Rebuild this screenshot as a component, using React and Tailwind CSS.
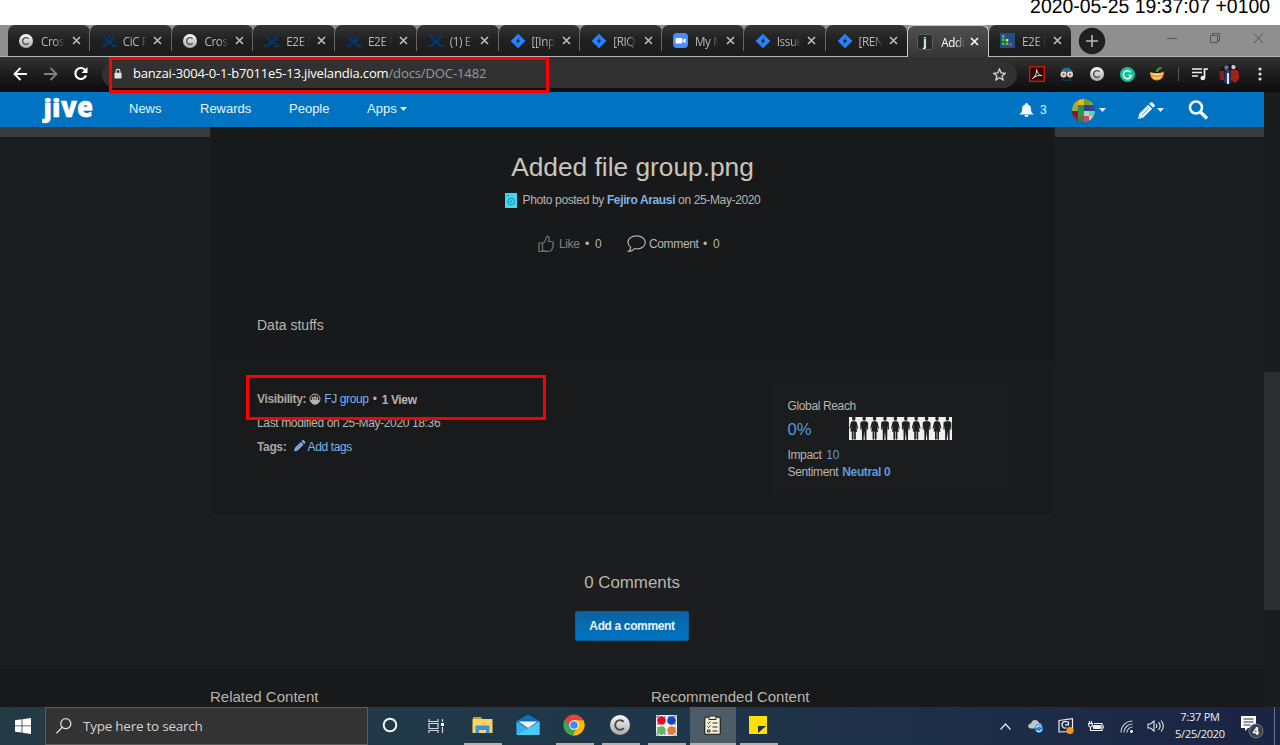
import React from "react";

const UI = "font-['Open_Sans','Noto_Sans',sans-serif]";

function CIcon({ size = 14 }) {
  return (
    <svg width={size} height={size} viewBox="0 0 24 24" className="shrink-0">
      <defs>
        <linearGradient id="cg" x1="0" y1="0" x2="0" y2="1">
          <stop offset="0" stopColor="#fafafa" />
          <stop offset="1" stopColor="#a9a9a9" />
        </linearGradient>
      </defs>
      <circle cx="12" cy="12" r="12" fill="url(#cg)" />
      <path d="M16.5 8.300a5.800 5.800 0 1 0 0 7.400" fill="none" stroke="#4c4c4c" strokeWidth="2.300" />
    </svg>
  );
}

function CrossIcon() {
  return (
    <svg width="16" height="14" viewBox="0 0 16 14" className="shrink-0" fill="none" stroke="#06366f">
      <path d="M3 1.500c.5 3 2 4.500 4.500 6 2 1.200 3.500 2.500 5 5" strokeWidth="2.300" />
      <path d="M13 1.500c-.5 3-2 4.500-4.500 6-2 1.200-3.500 2.500-5 5" strokeWidth="2.300" />
      <path d="M.5 12h4M11.500 12h4" strokeWidth="1.800" />
      <circle cx="8" cy="2.800" r="1.300" fill="#06366f" stroke="none" />
    </svg>
  );
}

function JiraIcon() {
  return (
    <svg width="16" height="16" viewBox="0 0 16 16" className="shrink-0">
      <path d="M8 .7 15.300 8 8 15.300.7 8z" fill="#2684ff" />
      <path d="M8 3.200 10.200 5.400 8 6.200zM8 9.800v3L5.800 10.600z" fill="#1767dd" />
      <path d="M8 6 10 8 8 10 6 8z" fill="#202020" />
    </svg>
  );
}

function ZoomIcon() {
  return (
    <svg width="15" height="15" viewBox="0 0 15 15" className="shrink-0">
      <rect width="15" height="15" rx="4" fill="#4a8cf7" />
      <rect x="2.500" y="5" width="6.800" height="5.500" rx="1" fill="#fff" />
      <path d="m9.800 7 2.800-1.800v5L9.800 8.600z" fill="#fff" />
    </svg>
  );
}

function JIcon() {
  return (
    <svg width="16" height="16" viewBox="0 0 16 16" className="shrink-0">
      <rect x=".5" y=".5" width="15" height="15" rx="2" fill="#292929" stroke="#5c5c5c" />
      <text x="8" y="11.500" textAnchor="middle" fontFamily="Liberation Sans" fontWeight="700" fontSize="12" fill="#fff">j</text>
    </svg>
  );
}

function GridIcon() {
  return (
    <svg width="15" height="15" viewBox="0 0 15 15" className="shrink-0">
      <rect width="15" height="15" fill="#1f4e8c" />
      <path d="M2 2h2.500v2.500H2zM2 5.500h2.500V8H2zM2 9.500h2.500V12H2zM5.800 9.500h2.500V12H5.800z" fill="#5fc03a" />
      <path d="M5.800 6h2.500v2.500H5.800z" fill="#f1dc45" />
      <path d="M9.500 10H12v2.500H9.500z" fill="#e5395a" />
    </svg>
  );
}

const ICONS = { c: CIcon, x: CrossIcon, jira: JiraIcon, zoom: ZoomIcon, j: JIcon, grid: GridIcon };

const TABS = [
  ["c", "Cros"], ["x", "CiC P"], ["c", "Cros"], ["x", "E2E F"], ["x", "E2E F"], ["x", "(1) E"],
  ["jira", "[[Inp"], ["jira", "[RIQ"], ["zoom", "My M"], ["jira", "Issue"], ["jira", "[REN"],
  ["j", "Addi"], ["grid", "E2E F"],
];

function Tab({ icon, title, index }) {
  const Icon = ICONS[icon];
  const active = index === 11;
  const shape = active
    ? "rounded-t-[7px] border border-b-0 border-[#c9c9c9] bg-linear-to-b from-[#505050] to-[#353535] text-white"
    : "mb-px rounded-t-[7px] bg-linear-to-b from-[#353535] via-[#202020] to-[#1b1b1b] text-[#b8b8b8]";
  const line = index < 10 ? "bg-[#666]" : "bg-transparent";
  return (
    <div className={`flex w-[81.75px] shrink-0 items-center ${shape}`}>
      <div className={`flex w-[33px] shrink-0 justify-start ${active ? "pl-[9px]" : "pl-[11px]"}`}>
        <Icon />
      </div>
      <div className={`w-[24px] shrink-0 overflow-hidden text-[11.7px] leading-4 tracking-[-0.4px] whitespace-nowrap mask-r-from-60% mask-r-to-100% ${UI}`}>{title}</div>
      <svg width="9" height="9" viewBox="0 0 9 9" className={`shrink-0 ${active ? "ml-[5px]" : "ml-[6.5px]"}`} stroke={active ? "#fff" : "#bdbdbd"} strokeWidth="1.600">
        <path d="m1 1 7 7M8 1 1 8" />
      </svg>
      <div className={`ml-auto h-[20px] w-px ${line}`} />
    </div>
  );
}

function TabStrip() {
  return (
    <div className="flex h-[32px] shrink-0 border-b border-[#b5b5b5] bg-[#8f8f8f]">
      <div className="-mb-px flex pl-[8px]">
        {TABS.map(([icon, title], i) => <Tab key={i} icon={icon} title={title} index={i} />)}
      </div>
      <svg width="28" height="28" viewBox="0 0 28 28" className="mt-[2px] ml-[7px]">
        <circle cx="14" cy="14" r="13.200" fill="#202020" />
        <path d="M14 8v12M8 14h12" stroke="#b9b9b9" strokeWidth="1.600" />
      </svg>
      <svg width="100" height="28" viewBox="0 0 100 28" className="ml-auto mr-[14px]" fill="none" stroke="#555">
        <path d="M1 13.500h10" />
        <path d="M44.500 10.500h7v7h-7zM46.500 10.500v-2h7v7h-2" />
        <path d="m88 8.500 9 9.500M97 8.500 88 18" />
      </svg>
    </div>
  );
}

function Toolbar() {
  return (
    <div className="flex h-[35px] shrink-0 items-center bg-linear-to-b from-[#333] via-[#1d1d1d] to-[#0c0c0c]">
      <svg width="102" height="34" viewBox="0 0 102 34" className="-mt-[2px]" fill="none" strokeWidth="1.900">
        <path d="M27 17H15m5.500-6L14.500 17l6 6" stroke="#f4f4f4" />
        <path d="M44 17h12m-5.500-6 6 6-6 6" stroke="#7f7f7f" />
        <path d="M85.500 13.500A5.500 5.500 0 1 0 86 18.500" stroke="#fff" strokeWidth="2.200" />
        <path d="M87.500 10v6h-6z" fill="#fff" />
      </svg>
      <div className={`mb-[1px] flex h-[27px] w-[915px] shrink-0 items-center rounded-full bg-[#313131] pr-[11px] pl-[12px] ${UI}`}>
        <svg width="8" height="12" viewBox="0 0 9 12"><rect x=".5" y="4.500" width="8" height="6.500" rx=".8" fill="#e0e0e0" /><path d="M2.300 5V3a2.200 2.200 0 0 1 4.400 0v2" fill="none" stroke="#e0e0e0" strokeWidth="1.200" /></svg>
        <div className="ml-[11px] text-[13px] whitespace-nowrap text-[#9b9b9b]">
          <span className="tracking-[-0.18px] text-white">banzai-3004-0-1-b7011e5-13.jivelandia.com</span>
          <span className="tracking-[-0.1px]">/docs/DOC-1482</span>
        </div>
        <svg width="13" height="13" viewBox="0 0 24 24" className="ml-auto" fill="none" stroke="#d5d5d5" strokeWidth="2.400"><path d="m12 2 3 7 7.500.7-5.700 5 1.800 7.300L12 18l-6.600 4 1.800-7.300-5.700-5L9 9z" /></svg>
      </div>
      <div className="mb-[1px] flex items-center">
        <svg width="16" height="16" viewBox="0 0 16 16" className="ml-[12px]"><rect x=".7" y=".7" width="14.600" height="14.600" fill="#2a0906" stroke="#c11d0b" strokeWidth="1.400" /><path d="M3.500 12.500C6 11 8 7 7.500 3.500c2 5.500 3.500 6 5.500 6-4-.5-6 .5-9.500 3z" fill="none" stroke="#f1dddd" /></svg>
        <svg width="16" height="16" viewBox="0 0 16 16" className="ml-[14px]"><path d="M2 7c0-4 3-6 6-5l2-1 1 2c3 1 3 3 3 5z" fill="#26718a" /><path d="M3 11c2 4 7 4 9 0v4H4z" fill="#173c4b" /><circle cx="4.500" cy="8.500" r="3" fill="#ead9cf" /><circle cx="11" cy="8.500" r="3" fill="#ead9cf" /><circle cx="4.500" cy="8.500" r="1.200" fill="#d54a35" /><circle cx="11" cy="8.500" r="1.200" fill="#d54a35" /></svg>
        <div className="ml-[15px]"><CIcon /></div>
        <svg width="15" height="15" viewBox="0 0 15 15" className="ml-[16px]"><circle cx="7.500" cy="7.500" r="7.500" fill="#15c39a" /><path d="M10.500 5.200a4 4 0 1 0 .8 3.300H8.500" fill="none" stroke="#fff" strokeWidth="1.400" /></svg>
        <svg width="16" height="16" viewBox="0 0 16 16" className="ml-[14px]"><path d="M1 6c4 1.500 10 1.500 14-.5 0 5-2.500 9-7 9S1 11 1 6z" fill="#ef9d27" /><path d="M2 7.500c4 1.500 8 1.500 12 0M4 11c2.500 1.500 5.500 1.500 8 0" stroke="#ffe6b0" strokeWidth="1.100" fill="none" /><path d="M7 6c0-3 2-4.500 5-5l1 2c-3 0-4 1.500-4 3z" fill="#4f9b28" /></svg>
        <div className="ml-[13px] h-[14px] w-px bg-[#555]" />
        <svg width="16" height="14" viewBox="0 0 16 14" className="ml-[13px]" stroke="#eee" strokeWidth="1.700" fill="none"><path d="M0 2h10M0 5.500h10M0 9h6M12.500 11V2H16" /><circle cx="10.800" cy="11" r="1.500" fill="#eee" /></svg>
        <svg width="21" height="21" viewBox="0 0 21 21" className="ml-[11px]"><defs><clipPath id="av"><circle cx="10.500" cy="10.500" r="10.500" /></clipPath></defs><g clipPath="url(#av)"><rect width="21" height="21" fill="#151824" /><path d="M0 7h5v9H1z" fill="#8d1d25" /><path d="M6 6h5l1 13H5z" fill="#29386d" /><path d="M8 9h2v11H8z" fill="#dce5ef" /><path d="M12 6h7l2 9-5 4-4-3z" fill="#9f2418" /><circle cx="7.500" cy="3.500" r="2.200" fill="#7e6d68" /><circle cx="14.500" cy="3" r="2.200" fill="#cfc9c4" /></g></svg>
        <svg width="4" height="14" viewBox="0 0 4 14" className="ml-[18px]" fill="#ddd"><circle cx="2" cy="2" r="1.600" /><circle cx="2" cy="7" r="1.600" /><circle cx="2" cy="12" r="1.600" /></svg>
      </div>
    </div>
  );
}

function Caret() {
  return <svg width="7" height="4" viewBox="0 0 7 4" className="shrink-0"><path d="M0 0h7L3.500 4z" fill="#e6f1f9" /></svg>;
}

function Pencil({ size, color, line }) {
  return (
    <svg width={size} height={size} viewBox="0 0 18 18" className="shrink-0" fill={color}>
      <path d="M11.800 1.900 13.200.5q1-.9 2 0l2.300 2.300q.9 1 0 2L16.100 6.200zM10.800 3 15 7.200 5.800 16.500 0 18 1.500 12.200z" />
      <path d="M4.500 13.500 11.500 6.500" stroke={line} strokeWidth="1" />
    </svg>
  );
}

const MOSAIC = [
  "#c8a51b", "#e9b417", "#6fa02a", "#86a938",
  "#95ac45", "#2c9148", "#2a3f8d", "#34468f",
  "#8d1520", "#3f8a55", "#9be0c5", "#68cdb7",
  "#a61d24", "#4a7a3c", "#cf4668", "#d9c9b4",
];

function SiteHeader() {
  return (
    <div className="flex h-[35px] shrink-0 items-center bg-[#0074c2] text-[13px] text-[#eaf4fb]">
      <svg width="52" height="35" viewBox="0 0 52 35" className="ml-[42px]" fontFamily="Open Sans" fontWeight="800" fill="#fff" stroke="#fff" strokeWidth=".4">
        <text x="1.500" y="24.500" textLength="17" lengthAdjust="spacingAndGlyphs" fontSize="24">ji</text>
        <text x="19" y="24.500" textLength="32" lengthAdjust="spacingAndGlyphs" fontSize="29">ve</text>
      </svg>
      <div className="-mt-px ml-[35px] w-[71px]">News</div>
      <div className="-mt-px w-[89px]">Rewards</div>
      <div className="-mt-px w-[78px]">People</div>
      <div className="-mt-px flex items-center gap-[3px]">Apps <Caret /></div>
      <div className="ml-auto flex w-[245px] items-center">
        <svg width="15" height="14" viewBox="0 0 15 14"><path d="M6.500 0h2v1.200c2.500.6 3.500 2.500 3.500 4.800 0 3 .8 4 2.500 5v.5H.5V11C2.200 10 3 9 3 6c0-2.300 1-4.200 3.500-4.800zM5.500 12h4c0 2.500-4 2.500-4 0z" fill="#f1f7fb" /></svg>
        <span className="ml-[6px] w-[32px] text-[12px]">3</span>
        <div className="mt-[2px] grid size-[23px] grid-cols-4 overflow-hidden rounded-full">
          {MOSAIC.map((c, i) => <div key={i} style={{ backgroundColor: c }} />)}
        </div>
        <div className="ml-[4px] w-[39px]"><Caret /></div>
        <div className="mt-[2px]"><Pencil size={17} color="#eef6fb" line="#5aa5d8" /></div>
        <div className="ml-[2px] w-[31px]"><Caret /></div>
        <svg width="21" height="20" viewBox="0 0 21 20" fill="none" stroke="#f3f8fc"><circle cx="8" cy="7.500" r="6" strokeWidth="2.600" /><path d="m12.500 12 6.500 6.500" strokeWidth="3.400" /></svg>
      </div>
    </div>
  );
}

function People() {
  const items = Array.from({ length: 10 }, (_, i) => i);
  return (
    <svg width="104" height="23" viewBox="0 0 104 23">
      <rect width="103" height="23" fill="#f2f1ee" />
      <g fill="#1f2121">
        {items.map((i) => (
          <g key={i} transform={`translate(${i * 10.400} 0)`}>
            <ellipse cx="4.800" cy="1.600" rx="1.700" ry="2.200" />
            {i % 2 === 0
              ? <path d="M3.200 4.300h3.200l1.300 1 1.500 6-.9.800-1.300-3.500 1.300 6.200H6.800V22.500H5.100v-8h-.6v8H2.800v-8H1.300L2.600 8.600 1.300 12.100l-.9-.8 1.500-6z" />
              : <path d="M2.800 4.300h4l1.900 1.200v7l-1 .3V8.500L7.100 14 7 23H5.500l-.7-8.500L4.100 23H2.600l-.1-9-.6-5.500v4.300l-1-.3v-7z" />}
          </g>
        ))}
      </g>
    </svg>
  );
}

function Post() {
  return (
    <div className="mx-auto h-[389px] w-[843px] shrink-0 border-b border-[#1f2122] bg-[#18191b]">
      <div className="h-[237px] border-b border-[#1c1e1f]">
        <h1 className="pt-[25px] text-center text-[26.3px] leading-[30px] text-[#c9c5bc]">Added file group.png</h1>
        <div className="mt-[10px] flex items-center justify-center gap-[6px] text-[12px] leading-4 tracking-[-0.36px]">
          <svg width="12" height="15" viewBox="0 0 12 15"><path d="M0 0h12v15H0z" fill="#42d7f2" /><circle cx="6.200" cy="8.500" r="3.300" fill="none" stroke="#168ca5" /><circle cx="6.200" cy="8.500" r="1" fill="#168ca5" /><path d="M2 2.500h2" stroke="#168ca5" /></svg>
          <div className="whitespace-nowrap">Photo posted by <b className="text-[#7fb3e6]">Fejiro Arausi</b> on 25-May-2020</div>
        </div>
        <div className="mt-[27px] flex h-[18px] items-center pl-[327px] text-[12px] tracking-[-0.36px]">
          <svg width="16" height="18" viewBox="0 0 16 18" fill="none" stroke="#77746e" strokeWidth="1.200"><path d="M1 8h3.500v8.500H1zM4.500 8.500C7 7 8 5 8.500 1.500c3-1 3 2 2 5H14c2 0 1.500 2 .8 2.500.8.700.6 2-.3 2.500.5 1 .2 1.800-.6 2.300.3 1-.2 2-1.400 2.200C9 17 7.500 16.500 4.500 15.800" /></svg>
          <span className="ml-[5px] w-[26px] text-[#85827c]">Like</span>
          <span className="w-[10px] text-[#bdb9b1]">•</span>
          <span className="w-[32px]">0</span>
          <svg width="19" height="18" viewBox="0 0 19 18" fill="none" stroke="#b3afa7" strokeWidth="1.200"><path d="M3.500 12C0 9.500.500 5 3 3c3.500-2.800 9.500-2.800 13 0 3 2.500 3 6.500 0 9-2.500 2-6 2.200-8.500 1.500C6 15.500 4 16.500 1.500 16.500 3 15.500 4 14 3.500 12z" /></svg>
          <span className="ml-[3px] w-[54px]">Comment</span>
          <span className="w-[10px]">•</span>
          <span>0</span>
        </div>
        <div className="mt-[62px] pl-[46px] text-[14px] leading-5">Data stuffs</div>
      </div>
      <div className="flex h-[151px] bg-[#191a1c] pl-[46px] text-[12px] tracking-[-0.36px]">
        <div className="w-[517px] pt-[27px] leading-4">
          <div className="flex items-center whitespace-nowrap">
            <b className="text-[#aba79f]">Visibility:</b>
            <svg width="12" height="12" viewBox="0 0 12 12" className="mr-[3px] ml-[3px] -mt-px"><circle cx="6" cy="6" r="5" fill="#2b2b2a" stroke="#b7b3aa" /><path d="M1.500 7h9a4.500 4.500 0 0 1-9 0z" fill="#b7b3aa" /><path d="M3 4h1.500v3H3zM5.300 3h1.500v4H5.300zM7.600 4H9v3H7.600z" fill="#b7b3aa" /></svg>
            <span className="text-[#7fb3e6]">FJ group</span>
            <span className="ml-[4px] w-[9px]">•</span>
            <b className="mt-[1px] -mb-[1px]">1 View</b>
          </div>
          <div className="mt-[8px]">Last modified on 25-May-2020 18:36</div>
          <div className="mt-[8px] flex items-center"><b className="w-[37px] text-[#aba79f]">Tags:</b><div className="-mt-[2px]"><Pencil size={11.5} color="#7fb3e6" line="#4a6f93" /></div><span className="ml-[2px] text-[#7fb3e6]">Add tags</span></div>
        </div>
        <div className="mt-[19px] h-[111px] w-[234px] bg-[#1b1c1e] pt-[15px] pl-[13.5px] leading-4">
          <div>Global Reach</div>
          <div className="mt-[3px] flex h-[23px] items-center tracking-normal"><span className="w-[61.5px] text-[16.5px] text-[#5a9bd8]">0%</span><People /></div>
          <div className="mt-[7px]">Impact <span className="ml-[2px] text-[#5a9bd8]">10</span></div>
          <div className="mt-[1px]">Sentiment <b className="ml-[1px] text-[#5a9bd8]">Neutral 0</b></div>
        </div>
      </div>
    </div>
  );
}

function Page() {
  return (
    <div className="flex min-h-0 flex-1 bg-[#1c1d1f]">
      <div className="flex w-[1264px] flex-col overflow-hidden text-[#b9b5ac]">
        <SiteHeader />
        <div className="flex h-[389px] shrink-0 justify-between">
          <div className="h-[10px] w-[210px] bg-[#373b3e]" />
          <Post />
          <div className="h-[10px] w-[209px] bg-[#373b3e]" />
        </div>
        <div className="flex h-[153px] shrink-0 flex-col items-center pt-[57px]">
          <div className="text-[16.9px] leading-5">0 Comments</div>
          <button className="mt-[18px] h-[30px] w-[114px] rounded-[2px] border border-[#0a5c99] bg-linear-to-b from-[#0963a1] to-[#0074c4] text-[12px] font-bold tracking-[-0.36px] text-[#eaf3fa]">Add a comment</button>
        </div>
        <div className="flex flex-1 bg-[#18191a] pt-[18px] pl-[210px] text-[15px] leading-5">
          <div className="w-[441px]">Related Content</div>
          <div>Recommended Content</div>
        </div>
      </div>
      <div className="flex-1 bg-[#191b1c] pt-[280px]"><div className="h-[238px] bg-[#2b2d2f]" /></div>
    </div>
  );
}

function TaskButton({ children, open, active }) {
  return (
    <div className={`flex w-[46px] shrink-0 flex-col items-center ${active ? "bg-[#4c5d67]" : ""}`}>
      <div className="flex h-[36px] items-center justify-center pr-[2px]">{children}</div>
      <div className={`h-[2px] ${active ? "w-[46px]" : "w-[38px]"} ${open ? "bg-[#b3afaa]" : ""}`} />
    </div>
  );
}

function Taskbar() {
  return (
    <div className={`flex h-[38px] shrink-0 bg-linear-to-r from-[#243b45] via-[#20374a] to-[#1a2444] ${UI}`}>
      <div className="flex w-[45px] items-center justify-center">
        <svg width="16" height="16" viewBox="0 0 16 16" fill="#fff"><path d="M0 2.200 6.600 1.300v6.200H0zM7.400 1.200 16 0v7.500H7.400zM0 8.300h6.600v6.300L0 13.700zM7.400 8.300H16V16l-8.600-1.200z" /></svg>
      </div>
      <div className="flex w-[323px] items-center border border-[#5c5c5c] bg-[#333] pl-[10px]">
        <svg width="16" height="16" viewBox="0 0 16 16" fill="none" stroke="#dcdcdc" strokeWidth="1.300"><circle cx="9.800" cy="5.700" r="5" /><path d="M6.200 9.300.5 15.200" /></svg>
        <span className="ml-[11px] text-[13.5px] tracking-[-0.25px] text-[#d2d2d2]">Type here to search</span>
      </div>
      <TaskButton><svg width="16" height="16"><circle cx="8" cy="8" r="6.300" fill="none" stroke="#f5f5f5" strokeWidth="2" /></svg></TaskButton>
      <TaskButton><svg width="17" height="14" viewBox="0 0 17 14" className="mt-px" fill="none" stroke="#d6dadd" strokeWidth="1.200"><path d="M1 0v2.500h9V0M1 14v-2.500h9V14M1 4.500h9v5H1zM14.500 0v3M14.500 8v6" /><path d="M13 4h3v3h-3z" fill="#fff" stroke="none" /></svg></TaskButton>
      <TaskButton open><svg width="21" height="18" viewBox="0 0 21 18"><path d="M1 1h8l1 2H1z" fill="#d29a27" /><path d="M.5 3h20v14H.5z" fill="#fbd463" /><path d="M3.500 9.500h14V17h-3.500v-3H7v3H3.500z" fill="#3a94dc" /></svg></TaskButton>
      <TaskButton><svg width="24" height="22" viewBox="0 0 24 22"><path d="M.5 7 12 .5 23.500 7v7H.5z" fill="#0d6fc0" /><path d="M.5 7.500 12 15l11.500-7.500V21H.5z" fill="#31b4ee" /><path d="M.5 21 23.500 7.500V21z" fill="#4cc9f8" /><path d="M2.500 7.500h19L12 14z" fill="#f5f5f5" /></svg></TaskButton>
      <TaskButton open><svg width="22" height="22" viewBox="0 0 48 48"><circle cx="24" cy="24" r="23" fill="#ea4335" /><path d="M4 12.500A23 23 0 0 0 20.800 46.800L31 29H15z" fill="#34a853" /><path d="M24 13.500h20.500A23 23 0 0 1 21 46.800l10-18z" fill="#fbbc05" /><circle cx="24" cy="24" r="10.500" fill="#fff" /><circle cx="24" cy="24" r="8.300" fill="#4285f4" /></svg></TaskButton>
      <TaskButton open><CIcon size={20} /></TaskButton>
      <TaskButton open><svg width="21" height="21" viewBox="0 0 21 21"><rect width="21" height="21" fill="#f0f1f8" /><path d="M0 2h21M0 19h21M2 0v21M19 0v21" stroke="#4a5fac" strokeDasharray="2 2" /><circle cx="5.500" cy="5.500" r="4.300" fill="#dd1420" /><circle cx="15.500" cy="5.500" r="4.300" fill="#1646b8" /><circle cx="5.500" cy="15.500" r="4.300" fill="#62b957" /><circle cx="15.500" cy="15.500" r="4.300" fill="#e77838" /></svg></TaskButton>
      <TaskButton open active><svg width="17" height="20" viewBox="0 0 17 20"><rect x=".7" y="2.200" width="15.600" height="17.200" rx="1.500" fill="#f5f0d7" stroke="#26292b" strokeWidth="1.300" /><path d="M5 1h7v3.500H5z" fill="#eee9d0" stroke="#26292b" /><path d="m3.500 7.500 1 1 2-2m-3 5 1 1 2-2M8.500 8h5M8.500 12h5M8.500 16h5M3.500 15h2.500v2H3.500z" stroke="#26292b" strokeWidth="1" fill="none" /></svg></TaskButton>
      <TaskButton open><svg width="18" height="18" viewBox="0 0 18 18"><path d="M0 0h18v18H0z" fill="#ffe000" /><path d="M9 17V10h8z" fill="#20303c" /></svg></TaskButton>
      <div className="ml-auto flex items-center text-[#f0f0f0]">
        <svg width="11" height="7" viewBox="0 0 11 7" fill="none" stroke="#e5e5e5" strokeWidth="1.300"><path d="M.5 6.500 5.500 1l5 5.500" /></svg>
        <svg width="16" height="14" viewBox="0 0 16 14" className="ml-[17px]"><path d="M3 9.500C-1 9-.5 4.500 3 4.500 4 0 10 0 11 4c2 0 3 1.500 3 3l-4 2.500z" fill="#c1c5c9" /><circle cx="11" cy="9.500" r="4.300" fill="#2380d8" /><path d="M8.500 9a2.500 2.500 0 0 1 4.800-.6M13.500 10.500a2.500 2.500 0 0 1-4.800.6" stroke="#fff" strokeWidth="1.100" fill="none" /></svg>
        <svg width="16" height="16" viewBox="0 0 16 16" className="ml-[14px]"><path d="M1 2.500 14.500.700v12.800L1 14z" fill="none" stroke="#eee" strokeWidth="1.200" /><path d="M10 4.800a3.300 3.300 0 1 0-1.500 5M7 6.800h3.500V3.500" fill="none" stroke="#eee" strokeWidth="1.200" /><circle cx="12" cy="12.500" r="3.500" fill="#ff9b0a" /></svg>
        <svg width="16" height="12" viewBox="0 0 16 12" className="ml-[14px]" fill="none" stroke="#eee"><path d="M0 3.500h5M1.500 1v2.500M3.500 1v2.500M.8 3.500v2c0 2 3.500 2 3.500 0v-2M2.500 7v3.500h11.500V3.500H6" strokeWidth="1.200" /><path d="M5.500 5.500h7v3h-7z" fill="#eee" /><path d="M15.300 5.500v3" /></svg>
        <svg width="13" height="13" viewBox="0 0 13 13" className="ml-[16px]" fill="none" stroke="#ccd0d8" strokeWidth="1.100"><path d="M1 12.500A11.500 11.500 0 0 1 12.500 1M4 12.500A8.500 8.500 0 0 1 12.500 4M7 12.500A5.500 5.500 0 0 1 12.500 7" /><circle cx="11.500" cy="11.500" r="1.400" fill="#fff" stroke="none" /></svg>
        <svg width="17" height="14" viewBox="0 0 17 14" className="ml-[14px]" fill="none" stroke="#e3e5ea" strokeWidth="1.100"><path d="M1 5h2.500l3.500-3v10L3.500 9H1zM9 5c1 1.200 1 2.800 0 4M11.500 3.200c2 2.300 2 5.300 0 7.600M14 1.500c3 3.500 3 7.500 0 11" /></svg>
        <div className="-mt-[2px] ml-[6px] w-[60px] text-center text-[11px] leading-[17px] tracking-[-0.25px]"><div>7:37 PM</div><div>5/25/2020</div></div>
        <svg width="24" height="24" viewBox="0 0 24 24" className="ml-[10px] mt-[2px]"><path d="M1 1h15v12H8l-3 3v-3H1z" fill="#fff" /><path d="M3.500 4h10M3.500 7h10M3.500 10h7" stroke="#1c2b47" /><circle cx="16" cy="16" r="7" fill="#3e4248" stroke="#777" /><text x="16" y="20" textAnchor="middle" fontSize="11" fontWeight="700" fill="#fff">4</text></svg>
        <div className="mr-[5px] ml-[10px] h-[38px] w-px bg-[#69718a]" />
      </div>
    </div>
  );
}

export default function App() {
  return (
    <div className="relative flex h-[745px] w-[1280px] flex-col overflow-hidden bg-white font-['Liberation_Sans',Arial,sans-serif]">
      <div className="flex h-[25px] shrink-0 justify-end pr-[10px] text-[19.4px] leading-5 whitespace-nowrap text-black">
        <div className="-mt-[4px]">2020-05-25 19:37:07 +0100</div>
      </div>
      <TabStrip />
      <Toolbar />
      <Page />
      <Taskbar />
      <div className="absolute top-[57px] left-[109px] h-[36px] w-[440px] border-3 border-[#fb0000]" />
      <div className="absolute top-[375px] left-[246px] h-[45px] w-[300px] border-3 border-[#fb0000]" />
    </div>
  );
}
